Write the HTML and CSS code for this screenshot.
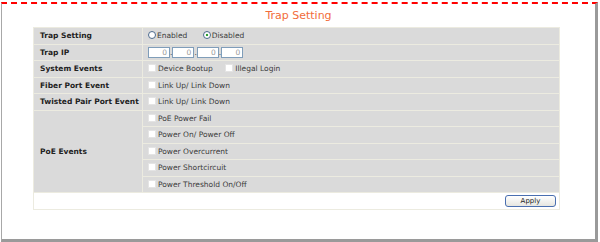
FILE: index.html
```html
<!DOCTYPE html>
<html lang="en">
<head>
    <meta charset="UTF-8">
    <title>Trap Setting</title>
    <link rel="stylesheet" href="styles.css">
</head>
<body>
    <div class="frame">
        <h1 class="title">Trap Setting</h1>
        <table class="settings">
            <tr>
                <td class="label">Trap Setting</td>
                <td class="value">
                    <span class="radio"></span><span class="opt">Enabled</span>
                    <span class="radio checked"></span><span class="opt">Disabled</span>
                </td>
            </tr>
            <tr>
                <td class="label">Trap IP</td>
                <td class="value">
                    <span class="ip">0</span>.<span class="ip">0</span>.<span class="ip">0</span>.<span class="ip">0</span>
                </td>
            </tr>
            <tr>
                <td class="label">System Events</td>
                <td class="value">
                    <span class="check"></span><span class="opt wide">Device Bootup</span>
                    <span class="check"></span><span class="opt">Illegal Login</span>
                </td>
            </tr>
            <tr>
                <td class="label">Fiber Port Event</td>
                <td class="value"><span class="check"></span>Link Up/ Link Down</td>
            </tr>
            <tr>
                <td class="label">Twisted Pair Port Event</td>
                <td class="value"><span class="check"></span>Link Up/ Link Down</td>
            </tr>
            <tr>
                <td class="label" rowspan="5">PoE Events</td>
                <td class="value"><span class="check"></span>PoE Power Fail</td>
            </tr>
            <tr>
                <td class="value"><span class="check"></span>Power On/ Power Off</td>
            </tr>
            <tr>
                <td class="value"><span class="check"></span>Power Overcurrent</td>
            </tr>
            <tr>
                <td class="value"><span class="check"></span>Power Shortcircuit</td>
            </tr>
            <tr>
                <td class="value"><span class="check"></span>Power Threshold On/Off</td>
            </tr>
            <tr>
                <td class="actions" colspan="2"><button class="apply">Apply</button></td>
            </tr>
        </table>
    </div>
</body>
</html>
```

FILE: styles.css
```css
body {
    margin: 0;
    background-color: #fff;
    font-family: "DejaVu Sans", Verdana, sans-serif;
}
.frame {
    box-sizing: border-box;
    width: 597px;
    height: 240px;
    margin: 2px 0 0 1px;
    border-top: 2px dashed #f00;
    border-left: 1px solid #a8a8a8;
    border-right: 3px solid #9a9a9a;
    border-bottom: 3px solid #9a9a9a;
    padding-top: 5px;
}
.title {
    margin: 0 0 4px;
    text-align: center;
    font-size: 11px;
    font-weight: normal;
    color: #f26b3a;
    line-height: 14px;
}
.settings {
    width: 527px;
    margin-left: 31px;
    border-collapse: collapse;
    border: 1px solid #d3d2c4;
    font-size: 7.5px;
}
.settings td {
    height: 15.5px;
    padding: 0;
    border: 1px solid #ecebe0;
    background-color: #dadada;
    vertical-align: middle;
}
.label {
    width: 102px;
    padding-left: 6px !important;
    font-weight: bold;
    color: #222;
}
.value {
    padding-left: 5px !important;
    color: #3a3a3a;
}
.opt {
    display: inline-block;
    margin-right: 13px;
}
.opt.wide {
    margin-right: 10px;
}
.radio {
    display: inline-block;
    box-sizing: border-box;
    width: 8px;
    height: 8px;
    margin-right: 1px;
    border: 1px solid #4b6a8c;
    border-radius: 50%;
    background-color: #fff;
    vertical-align: -1px;
}
.radio.checked {
    background: radial-gradient(circle, #2fa02f 0 1.2px, #fff 1.6px);
}
.check {
    display: inline-block;
    box-sizing: border-box;
    width: 8px;
    height: 8px;
    margin-right: 2px;
    border: 1px solid #e4e4e4;
    background-color: #fff;
    vertical-align: -1px;
}
.ip {
    display: inline-block;
    box-sizing: border-box;
    width: 22px;
    height: 11px;
    padding-right: 2px;
    border: 1px solid #7f9db9;
    background-color: #fff;
    color: #999;
    text-align: right;
    line-height: 9px;
    vertical-align: middle;
}
.settings td.actions {
    height: 16px;
    background-color: #fff;
    text-align: right;
    padding-right: 3px;
}
.apply {
    width: 51px;
    height: 12px;
    padding: 0;
    border: 1px solid #4a6fb0;
    border-radius: 3px;
    background: linear-gradient(#fff, #e6e6e0);
    font-family: "DejaVu Sans", Verdana, sans-serif;
    font-size: 7px;
    color: #222;
    line-height: 10px;
}
```
